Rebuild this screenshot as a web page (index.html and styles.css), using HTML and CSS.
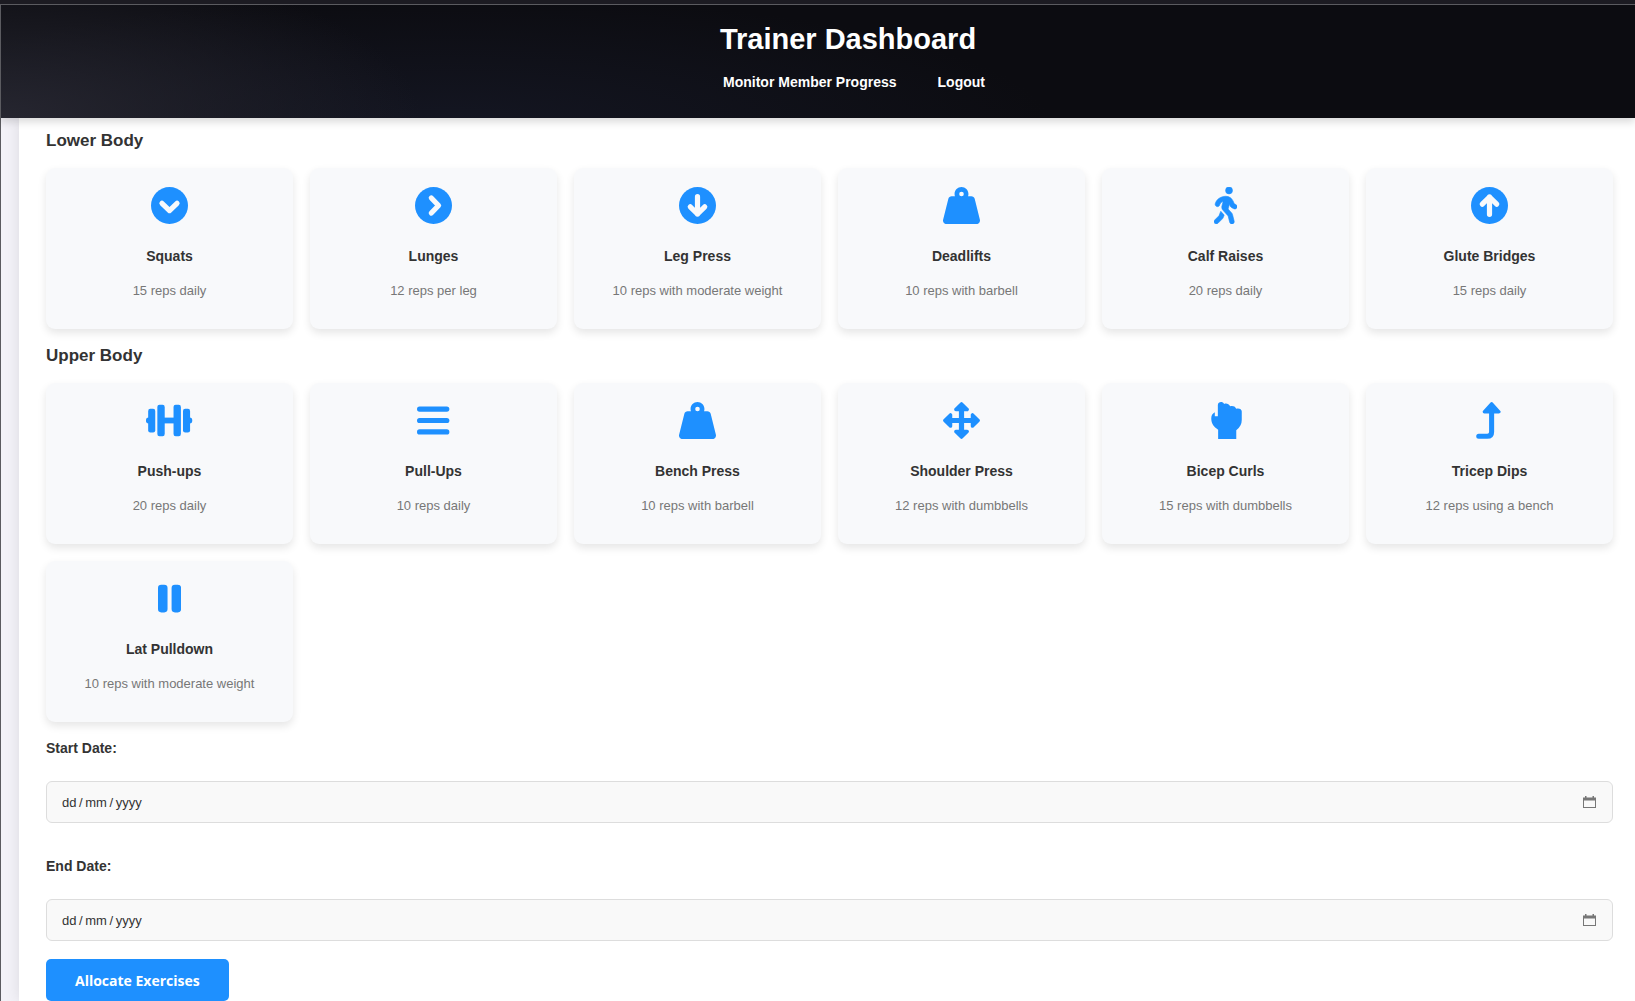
FILE: index.html
```html
<!DOCTYPE html>
<html lang="en">
<head>
    <meta charset="UTF-8">
    <meta name="viewport" content="width=device-width, initial-scale=1.0">
    <title>Trainer Dashboard</title>
    <link rel="stylesheet" href="styles.css">
</head>
<body>

    <!-- Header -->
    <header class="header">
        <h1>Trainer Dashboard</h1>
        <nav class="nav">
            <a href="#">Monitor Member Progress</a>
            <a href="#">Logout</a>
        </nav>
    </header>

    <main class="container">
        <form>
            <h3>Lower Body</h3>
            <div class="exercise-grid">
                <div class="card">
                    <svg class="icon" viewBox="0 0 512 512"><circle cx="256" cy="256" r="256"/><path class="cut" d="M152 226l104 100 104-100"/></svg>
                    <h4>Squats</h4>
                    <p>15 reps daily</p>
                </div>
                <div class="card">
                    <svg class="icon" viewBox="0 0 512 512"><circle cx="256" cy="256" r="256"/><path class="cut" d="M226 152l100 104-100 104"/></svg>
                    <h4>Lunges</h4>
                    <p>12 reps per leg</p>
                </div>
                <div class="card">
                    <svg class="icon" viewBox="0 0 512 512"><circle cx="256" cy="256" r="256"/><path class="cut" d="M256 134V374M156 274l100 100 100-100"/></svg>
                    <h4>Leg Press</h4>
                    <p>10 reps with moderate weight</p>
                </div>
                <div class="card">
                    <svg class="icon" viewBox="0 0 512 512"><path d="M224 96a32 32 0 1 1 64 0 32 32 0 1 1 -64 0zm122.5 32c3.5-10 5.5-20.8 5.5-32c0-53-43-96-96-96s-96 43-96 96c0 11.2 1.9 22 5.5 32H120c-22 0-41.2 15-46.6 36.4l-72 288c-3.6 14.3-.4 29.5 8.7 41.2S33.2 512 48 512H464c14.8 0 28.7-6.8 37.8-18.5s12.3-26.8 8.7-41.2l-72-288C433.2 143 414 128 392 128H346.5z"/></svg>
                    <h4>Deadlifts</h4>
                    <p>10 reps with barbell</p>
                </div>
                <div class="card">
                    <svg class="icon" viewBox="0 0 320 512"><path class="walk" d="M160 48a48 48 0 1 1 96 0 48 48 0 1 1 -96 0zM126.5 199.3c-1 .4-1.9 .8-2.9 1.2l-8 3.5c-16.4 7.3-29 21.2-34.7 38.2l-2.6 7.8c-5.6 16.8-23.7 25.8-40.5 20.2s-25.8-23.7-20.2-40.5l2.6-7.8c11.4-34.1 36.6-61.9 69.4-76.5l8-3.5c20.8-9.2 43.3-14 66.1-14c44.6 0 84.8 26.8 101.9 67.9L281 232.7l21.4 10.7c15.8 7.9 22.2 27.1 14.3 42.9s-27.1 22.2-42.9 14.3L247 287.3c-10.3-5.2-18.4-13.8-22.8-24.5l-9.6-23-19.3 65.5 49.5 54c5.4 5.9 9.2 13 11.2 20.8l23 92.1c4.3 17.1-6.1 34.5-23.3 38.8s-34.5-6.1-38.8-23.3l-22-88.1-70.7-77.1c-14.8-16.1-20.3-38.6-14.7-59.7l16.9-63.5zM68.7 398l25-62.4c2.1 3 4.5 5.8 7 8.6l40.7 44.4-14.5 36.2c-2.4 6-6 11.5-10.6 16.1L54.6 502.6c-12.5 12.5-32.8 12.5-45.3 0s-12.5-32.8 0-45.3L68.7 398z"/></svg>
                    <h4>Calf Raises</h4>
                    <p>20 reps daily</p>
                </div>
                <div class="card">
                    <svg class="icon" viewBox="0 0 512 512"><circle cx="256" cy="256" r="256"/><path class="cut" d="M256 378V138M156 238l100-100 100 100"/></svg>
                    <h4>Glute Bridges</h4>
                    <p>15 reps daily</p>
                </div>
            </div>

            <h3>Upper Body</h3>
            <div class="exercise-grid">
                <div class="card">
                    <svg class="icon" viewBox="0 0 640 512"><rect x="0" y="216" width="70" height="80" rx="36"/><rect x="570" y="216" width="70" height="80" rx="36"/><rect x="30" y="95" width="98" height="326" rx="30"/><rect x="157" y="38" width="102" height="436" rx="30"/><rect x="240" y="216" width="160" height="80"/><rect x="381" y="38" width="102" height="436" rx="30"/><rect x="512" y="95" width="98" height="326" rx="30"/></svg>
                    <h4>Push-ups</h4>
                    <p>20 reps daily</p>
                </div>
                <div class="card">
                    <svg class="icon" viewBox="0 0 448 512"><rect y="62" width="448" height="72" rx="36"/><rect y="220" width="448" height="72" rx="36"/><rect y="378" width="448" height="72" rx="36"/></svg>
                    <h4>Pull-Ups</h4>
                    <p>10 reps daily</p>
                </div>
                <div class="card">
                    <svg class="icon" viewBox="0 0 512 512"><path d="M224 96a32 32 0 1 1 64 0 32 32 0 1 1 -64 0zm122.5 32c3.5-10 5.5-20.8 5.5-32c0-53-43-96-96-96s-96 43-96 96c0 11.2 1.9 22 5.5 32H120c-22 0-41.2 15-46.6 36.4l-72 288c-3.6 14.3-.4 29.5 8.7 41.2S33.2 512 48 512H464c14.8 0 28.7-6.8 37.8-18.5s12.3-26.8 8.7-41.2l-72-288C433.2 143 414 128 392 128H346.5z"/></svg>
                    <h4>Bench Press</h4>
                    <p>10 reps with barbell</p>
                </div>
                <div class="card">
                    <svg class="icon" viewBox="0 0 512 512"><path class="head" d="M256 26l78 78H178zM256 486l78-78H178zM26 256l78-78V334zM486 256l-78-78V334z"/><path d="M220 80h72V432h-72zM80 220H432v72H80z"/></svg>
                    <h4>Shoulder Press</h4>
                    <p>12 reps with dumbbells</p>
                </div>
                <div class="card">
                    <svg class="icon" viewBox="-32 0 512 512"><path d="M118 40C122-10 188-10 204 26 236 12 270 24 288 60 320 50 356 58 372 92 412 80 449 98 449 130V250C449 310 425 350 373 390V512H122V384C62 346 27 300 27 230 27 190 40 160 76 142V196H118z"/></svg>
                    <h4>Bicep Curls</h4>
                    <p>15 reps with dumbbells</p>
                </div>
                <div class="card">
                    <svg class="icon" viewBox="0 0 384 512"><path class="head" d="M216 26l100 110H116z"/><path class="line" d="M38 474h118q60 0 60-60V130"/></svg>
                    <h4>Tricep Dips</h4>
                    <p>12 reps using a bench</p>
                </div>
                <div class="card">
                    <svg class="icon" viewBox="0 0 320 512"><rect y="64" width="132" height="384" rx="46"/><rect x="188" y="64" width="132" height="384" rx="46"/></svg>
                    <h4>Lat Pulldown</h4>
                    <p>10 reps with moderate weight</p>
                </div>
            </div>

            <!-- Dates -->
            <div class="form-group">
                <label for="startDate">Start Date:</label>
                <div class="date-field">
                    <input type="text" id="startDate" placeholder="dd&thinsp;/&thinsp;mm&thinsp;/&thinsp;yyyy">
                    <svg viewBox="0 0 13 12"><path d="M0 1.500H2V0H3.500V1.500H9.500V0H11V1.500H13V12H0zM1 4.500V11H12V4.500z"/></svg>
                </div>
            </div>
            <div class="form-group">
                <label for="endDate">End Date:</label>
                <div class="date-field">
                    <input type="text" id="endDate" placeholder="dd&thinsp;/&thinsp;mm&thinsp;/&thinsp;yyyy">
                    <svg viewBox="0 0 13 12"><path d="M0 1.500H2V0H3.500V1.500H9.500V0H11V1.500H13V12H0zM1 4.500V11H12V4.500z"/></svg>
                </div>
            </div>

            <button type="submit">Allocate Exercises</button>
        </form>
    </main>

</body>
</html>
```
FILE: styles.css
```css
/* General Styles */
* {
    box-sizing: border-box;
}

body {
    font-family: "Liberation Sans", Arial, sans-serif;
    margin: 0;
    border-top: 4px solid #1c1b22;
    background-color: #f3f2f8;
    color: #333;
}

/* Header */
.header {
    position: relative;
    z-index: 1;
    height: 114px;
    padding: 18px 0 0 60px;
    border-top: 1px solid #5b5b60;
    border-left: 1px solid #5b5b60;
    background:
        radial-gradient(ellipse 420px 160px at 0 100%, #262630, transparent),
        radial-gradient(ellipse 600px 130px at 450px 120px, #141622, transparent),
        #0c0c11;
    box-shadow: 0 4px 8px rgba(0, 0, 0, 0.15);
    color: #fff;
    text-align: center;
}

.header h1 {
    margin: 0;
    font-size: 29px;
    line-height: 32px;
}

.nav {
    display: flex;
    justify-content: center;
    gap: 41px;
    margin-top: 18px;
    padding-left: 12px;
}

.nav a {
    color: #fff;
    font-size: 14px;
    font-weight: bold;
    line-height: 18px;
    text-decoration: none;
}

/* Content */
.container {
    border-left: 1px solid #5b5b60;
    padding-left: 18px;
}

form {
    padding: 13px 22px 0 27px;
    background: #fff;
    box-shadow: 0 0 15px rgba(0, 0, 0, 0.1);
}

h3 {
    margin: 0 0 17px;
    font-size: 17px;
    line-height: 20px;
}

.exercise-grid {
    display: grid;
    grid-template-columns: repeat(6, 1fr);
    gap: 17px;
    margin-bottom: 17px;
}

.card {
    padding: 19px 18px 30px;
    border-radius: 9px;
    background: #f8f9fb;
    box-shadow: 0 4px 8px rgba(0, 0, 0, 0.1);
    text-align: center;
}

.icon {
    display: block;
    height: 37px;
    margin: 0 auto 24px;
    fill: #1e90ff;
}

.icon .cut {
    fill: none;
    stroke: #f8f9fb;
    stroke-width: 72;
    stroke-linecap: round;
    stroke-linejoin: round;
}

.icon .walk {
    stroke: #1e90ff;
    stroke-width: 8;
}

.icon .head {
    stroke: #1e90ff;
    stroke-width: 48;
    stroke-linejoin: round;
}

.icon .line {
    fill: none;
    stroke: #1e90ff;
    stroke-width: 70;
    stroke-linecap: round;
}

.card h4 {
    margin: 0 0 17px;
    font-size: 14px;
    line-height: 17px;
}

.card p {
    margin: 0;
    color: #777;
    font-size: 13px;
    line-height: 17px;
}

/* Dates */
.form-group {
    margin-bottom: 34px;
}

.form-group:last-of-type {
    margin-bottom: 18px;
}

label {
    display: block;
    margin-bottom: 24px;
    font-size: 14px;
    font-weight: bold;
    line-height: 18px;
}

.date-field {
    display: flex;
    align-items: center;
    height: 42px;
    padding: 0 16px 0 15px;
    border: 1px solid #ddd;
    border-radius: 6px;
    background: #f9f9f9;
}

.date-field input {
    flex: 1;
    padding: 0;
    border: none;
    background: none;
    font-family: inherit;
    font-size: 13px;
    outline: none;
}

.date-field input::placeholder {
    color: #333;
}

.date-field svg {
    width: 13px;
    height: 12px;
    fill: #777;
    fill-rule: evenodd;
}

button {
    display: block;
    height: 42px;
    padding: 0 29px;
    border: none;
    border-radius: 5px;
    background: #1e90ff;
    color: #fff;
    font-family: "Open Sans", "Noto Sans", sans-serif;
    font-size: 14px;
    font-weight: bold;
    cursor: pointer;
}
```
